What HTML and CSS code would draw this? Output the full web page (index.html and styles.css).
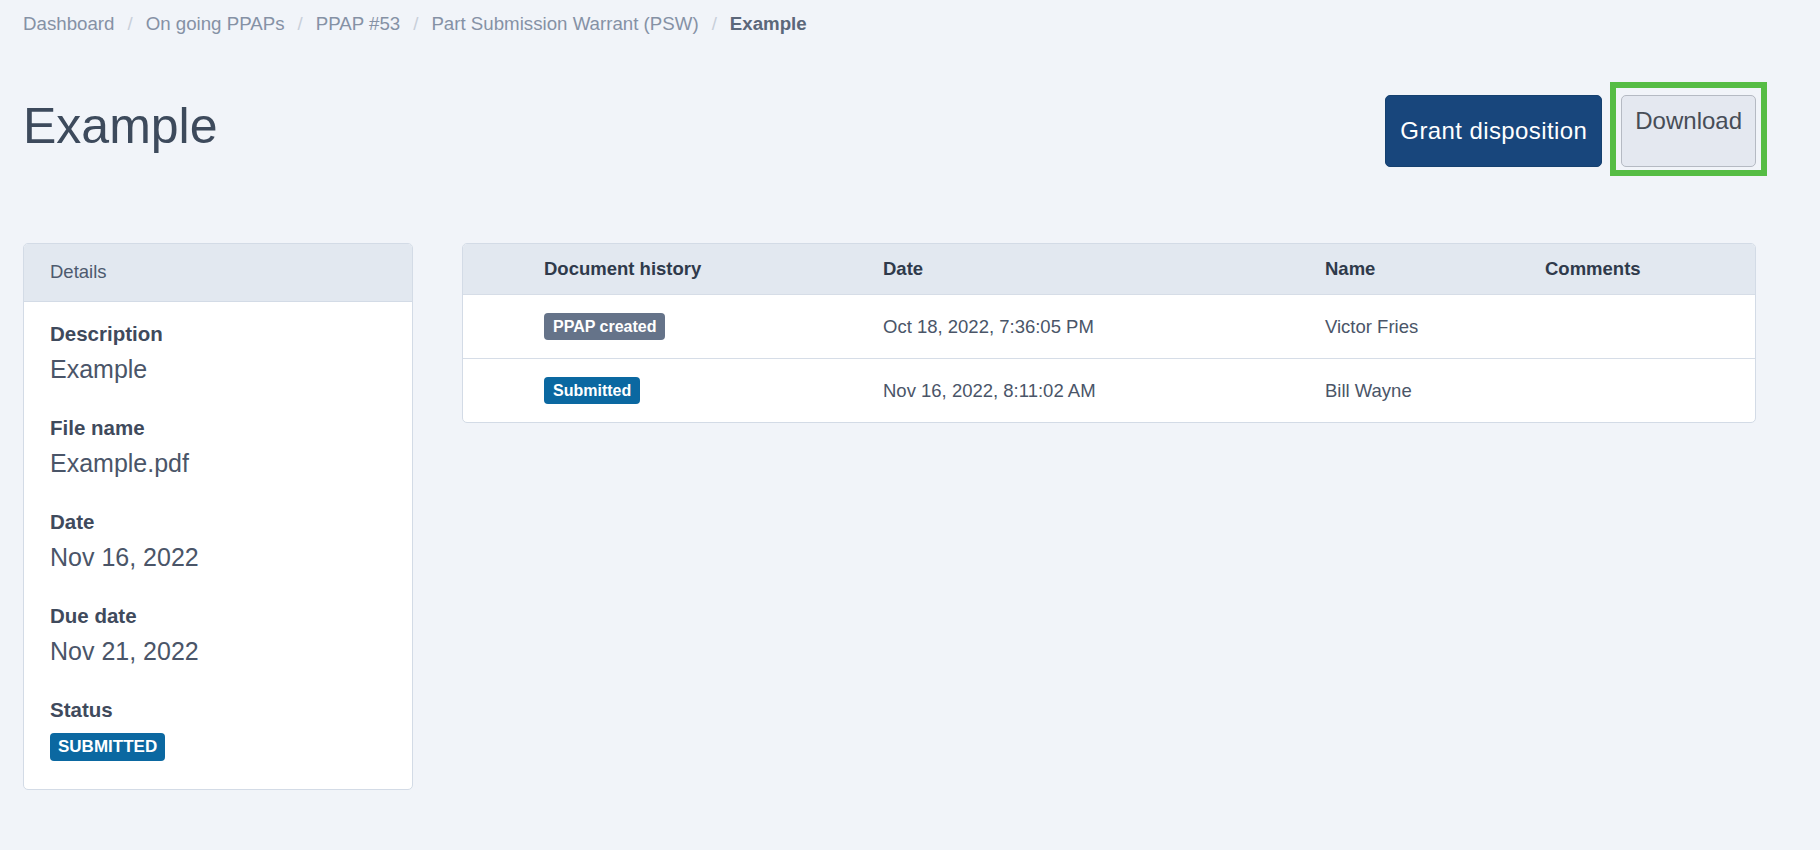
FILE: index.html
```html
<!DOCTYPE html>
<html lang="en">
<head>
<meta charset="utf-8">
<title>Example</title>
<link rel="stylesheet" href="styles.css">
</head>
<body>
<div class="page">
  <nav class="breadcrumb">
    <a class="crumb">Dashboard</a><span class="sep">/</span>
    <a class="crumb">On going PPAPs</a><span class="sep">/</span>
    <a class="crumb">PPAP #53</a><span class="sep">/</span>
    <a class="crumb">Part Submission Warrant (PSW)</a><span class="sep">/</span>
    <span class="crumb active">Example</span>
  </nav>

  <header class="page-header">
    <h1 class="title">Example</h1>
    <div class="actions">
      <button class="btn btn-primary">Grant disposition</button>
      <button class="btn btn-light highlighted">Download</button>
    </div>
  </header>

  <main class="content">
    <section class="card details">
      <div class="card-header">Details</div>
      <div class="card-body">
        <div class="field">
          <div class="label">Description</div>
          <div class="value">Example</div>
        </div>
        <div class="field">
          <div class="label">File name</div>
          <div class="value">Example.pdf</div>
        </div>
        <div class="field">
          <div class="label">Date</div>
          <div class="value">Nov 16, 2022</div>
        </div>
        <div class="field">
          <div class="label">Due date</div>
          <div class="value">Nov 21, 2022</div>
        </div>
        <div class="field">
          <div class="label">Status</div>
          <div class="value"><span class="badge badge-blue badge-status">SUBMITTED</span></div>
        </div>
      </div>
    </section>

    <section class="card history">
      <div class="row head">
        <div class="cell"></div>
        <div class="cell">Document history</div>
        <div class="cell">Date</div>
        <div class="cell">Name</div>
        <div class="cell">Comments</div>
      </div>
      <div class="row">
        <div class="cell"></div>
        <div class="cell"><span class="badge badge-gray">PPAP created</span></div>
        <div class="cell">Oct 18, 2022, 7:36:05 PM</div>
        <div class="cell">Victor Fries</div>
        <div class="cell"></div>
      </div>
      <div class="row">
        <div class="cell"></div>
        <div class="cell"><span class="badge badge-blue">Submitted</span></div>
        <div class="cell">Nov 16, 2022, 8:11:02 AM</div>
        <div class="cell">Bill Wayne</div>
        <div class="cell"></div>
      </div>
    </section>
  </main>
</div>
</body>
</html>
```

FILE: styles.css
```css
* { box-sizing: border-box; }

html, body {
  margin: 0;
  padding: 0;
  background: #f1f4f9;
  font-family: "Liberation Sans", Arial, sans-serif;
  color: #4a5568;
}

.page {
  padding: 13px 64px 40px 23px;
}

.breadcrumb {
  display: flex;
  align-items: center;
  font-size: 18.7px;
  line-height: 22px;
  color: #8591a5;
}

.crumb { color: #8591a5; text-decoration: none; }
.crumb.active { color: #5b677a; font-weight: bold; }

.sep {
  color: #c8cfd9;
  margin: 0 13px;
}

.page-header {
  display: flex;
  justify-content: space-between;
  align-items: flex-start;
  margin-top: 60px;
}

.title {
  margin: 2px 0 0 0;
  font-size: 50px;
  line-height: 58px;
  font-weight: normal;
  color: #3d4a5c;
}

.actions {
  display: flex;
  align-items: stretch;
  gap: 19px;
}

.btn {
  font-family: "Liberation Sans", Arial, sans-serif;
  font-size: 24px;
  line-height: 28px;
  border-radius: 5px;
  cursor: pointer;
}

.btn-primary {
  background: #18467c;
  color: #ffffff;
  border: 1px solid #15406f;
  padding: 21px 14px;
  letter-spacing: 0.4px;
}

.btn-light {
  position: relative;
  background: #e4e8f0;
  color: #474d57;
  border: 1px solid #b5bac3;
  padding: 11px 13px 0;
  align-self: stretch;
  display: flex;
  align-items: flex-start;
}

.highlighted::after {
  content: "";
  position: absolute;
  top: -14px;
  left: -12px;
  right: -12px;
  bottom: -10px;
  border: 6px solid #56bd45;
  pointer-events: none;
}

.content {
  display: grid;
  grid-template-columns: 390px 1fr;
  gap: 49px;
  align-items: start;
  margin-top: 76px;
}

.card {
  background: #ffffff;
  border: 1px solid #d3dbe6;
  border-radius: 5px;
  overflow: hidden;
}

.card-header {
  background: #e2e8f0;
  border-bottom: 1px solid #d3dbe6;
  padding: 17px 26px 18px;
  font-size: 18.5px;
  line-height: 22px;
  color: #4d5a6e;
}

.card-body {
  padding: 17px 26px 0;
}

.field { margin-bottom: 24px; }

.label {
  font-size: 20.5px;
  line-height: 30px;
  font-weight: bold;
  color: #3f4a5c;
}

.value {
  font-size: 25px;
  line-height: 40px;
  color: #4a5568;
}

.badge {
  display: inline-block;
  color: #ffffff;
  font-weight: bold;
  border-radius: 4px;
  vertical-align: middle;
}

.badge-status {
  font-size: 17px;
  line-height: 28px;
  padding: 0 8px;
}

.badge-blue { background: #0b68a1; }
.badge-gray { background: #657389; }

.history .badge {
  font-size: 16px;
  line-height: 27px;
  padding: 0 9px;
}

.row {
  display: grid;
  grid-template-columns: 81px 339px 442px 220px 1fr;
  align-items: center;
  height: 64px;
  border-top: 1px solid #d6dde7;
  font-size: 18.5px;
  color: #4a5568;
}

.row.head {
  height: 50px;
  border-top: none;
  background: #e2e8f0;
  font-weight: bold;
  color: #2f3a4b;
}

.row .cell { white-space: nowrap; }
```
